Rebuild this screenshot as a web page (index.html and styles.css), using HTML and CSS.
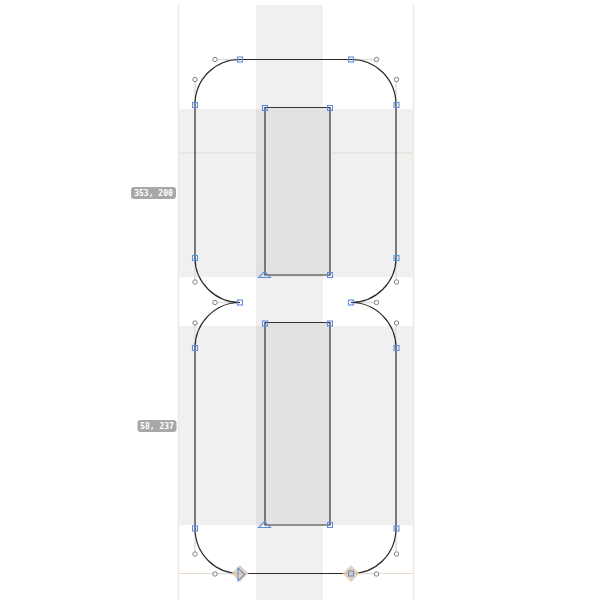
FILE: index.html
```html
<!DOCTYPE html>
<html lang="en">
<head>
    <meta charset="UTF-8">
    <title>Glyph Editor</title>
    <link rel="stylesheet" href="styles.css">
</head>
<body>
    <div class="canvas">
        <svg class="glyph" width="600" height="600" viewBox="0 0 600 600">
            <!-- Metric bands -->
            <rect class="band" x="256" y="5" width="67" height="595"/>
            <rect class="band" x="178" y="109" width="235" height="168"/>
            <rect class="band" x="178" y="326" width="235" height="199"/>

            <!-- Guides -->
            <path class="guide" d="M178.500 5V600M413.500 5V600"/>
            <path class="guide-base" d="M178 573.500H413"/>
            <path class="guide-soft" d="M178 153H413"/>

            <!-- Handles -->
            <path class="handle" d="M240 59.500H215M351 59.500H376M195 105V79M396 105V79M195 258V282M396 258V282M240 302.500H215M351 302.500H376M195 348V323M396 348V323M195 528V554M396 528V554M240 573.500H215M351 573.500H376"/>

            <!-- Outlines -->
            <path class="counter" d="M265 107.500H330V275H265Z"/>
            <path class="counter" d="M265 322.500H330V525H265Z"/>
            <path class="outline" d="M240 59.500H351C376 59.500 396 79 396 105V258C396 282 376 302.500 351 302.500C376 302.500 396 323 396 348V528C396 554 376 573.500 351 573.500H240C215 573.500 195 554 195 528V348C195 323 215 302.500 240 302.500C215 302.500 195 282 195 258V105C195 79 215 59.500 240 59.500Z"/>
            <path class="start" d="M240 565L248.500 573.500L240 582L231.500 573.500Z"/>
            <path class="start" d="M351 565L359.500 573.500L351 582L342.500 573.500Z"/>

            <!-- Off-curve points -->
            <g class="off">
                <circle cx="215" cy="59.500" r="2.200"/><circle cx="376.500" cy="59.500" r="2.200"/>
                <circle cx="195" cy="79.500" r="2.200"/><circle cx="396.500" cy="79.500" r="2.200"/>
                <circle cx="195" cy="282" r="2.200"/><circle cx="396.500" cy="282" r="2.200"/>
                <circle cx="215" cy="302.500" r="2.200"/><circle cx="376.500" cy="302.500" r="2.200"/>
                <circle cx="195" cy="323" r="2.200"/><circle cx="396.500" cy="323" r="2.200"/>
                <circle cx="195" cy="554" r="2.200"/><circle cx="396.500" cy="554" r="2.200"/>
                <circle cx="215" cy="574" r="2.200"/><circle cx="376.500" cy="574" r="2.200"/>
            </g>

            <!-- On-curve points -->
            <g class="on">
                <rect x="237.500" y="57" width="5" height="5"/><rect x="348.500" y="57" width="5" height="5"/>
                <rect x="192.500" y="102.500" width="5" height="5"/><rect x="394" y="102.500" width="5" height="5"/>
                <rect x="262.500" y="105.500" width="5" height="5"/><rect x="327.500" y="105.500" width="5" height="5"/>
                <rect x="192.500" y="255.500" width="5" height="5"/><rect x="394" y="255.500" width="5" height="5"/>
                <rect x="327.500" y="272.500" width="5" height="5"/>
                <rect x="237.500" y="300" width="5" height="5"/><rect x="348.500" y="300" width="5" height="5"/>
                <rect x="262.500" y="321" width="5" height="5"/><rect x="327.500" y="321" width="5" height="5"/>
                <rect x="192.500" y="345.500" width="5" height="5"/><rect x="394" y="345.500" width="5" height="5"/>
                <rect x="327.500" y="522.500" width="5" height="5"/>
                <rect x="192.500" y="526" width="5" height="5"/><rect x="394" y="526" width="5" height="5"/>
                <rect x="348.500" y="571" width="5" height="5"/>
                <path d="M258.500 277.500L264.500 271.500L270.500 277.500Z"/>
                <path d="M258.500 527.500L264.500 521.500L270.500 527.500Z"/>
                <path d="M238 568L244.500 574.500L238 581Z"/>
            </g>

            <!-- Coordinate labels -->
            <rect class="tag" x="131" y="187" width="45" height="12" rx="3"/>
            <text class="tag-text" x="153.500" y="196">353, 200</text>
            <rect class="tag" x="137.500" y="420" width="39" height="12" rx="3"/>
            <text class="tag-text" x="157" y="429">58, 237</text>
        </svg>
    </div>
</body>
</html>
```

FILE: styles.css
```css
/* General Styles */
body {
    margin: 0;
    background-color: #fff;
}

.canvas {
    width: 600px;
    height: 600px;
    overflow: hidden;
}

.glyph {
    display: block;
}

/* Metrics */
.band {
    fill: #000;
    fill-opacity: 0.06;
}

.guide {
    fill: none;
    stroke: #f5e6d9;
    stroke-width: 1.5;
}

.guide-base {
    fill: none;
    stroke: #eadccb;
    stroke-width: 1;
}

.guide-soft {
    fill: none;
    stroke: #e0dbd5;
    stroke-width: 1;
}

/* Outlines */
.outline {
    fill: none;
    stroke: #2a2a2a;
    stroke-width: 1.2;
}

.counter {
    fill: #e2e2e2;
    stroke: #333;
    stroke-width: 1.2;
}

.handle {
    fill: none;
    stroke: #ddd;
    stroke-width: 1.5;
}

/* Points */
.start {
    fill: #e3cdb4;
    fill-opacity: 0.9;
}

.off circle {
    fill: #fff;
    stroke: #808080;
    stroke-width: 1;
}

.on rect,
.on path {
    fill: none;
    stroke: #5f8fdc;
    stroke-width: 1.1;
}

/* Coordinate labels */
.tag {
    fill: #a8a8a8;
}

.tag-text {
    fill: #fff;
    font-family: "DejaVu Sans Mono", monospace;
    font-size: 8px;
    font-weight: bold;
    text-anchor: middle;
}
```
